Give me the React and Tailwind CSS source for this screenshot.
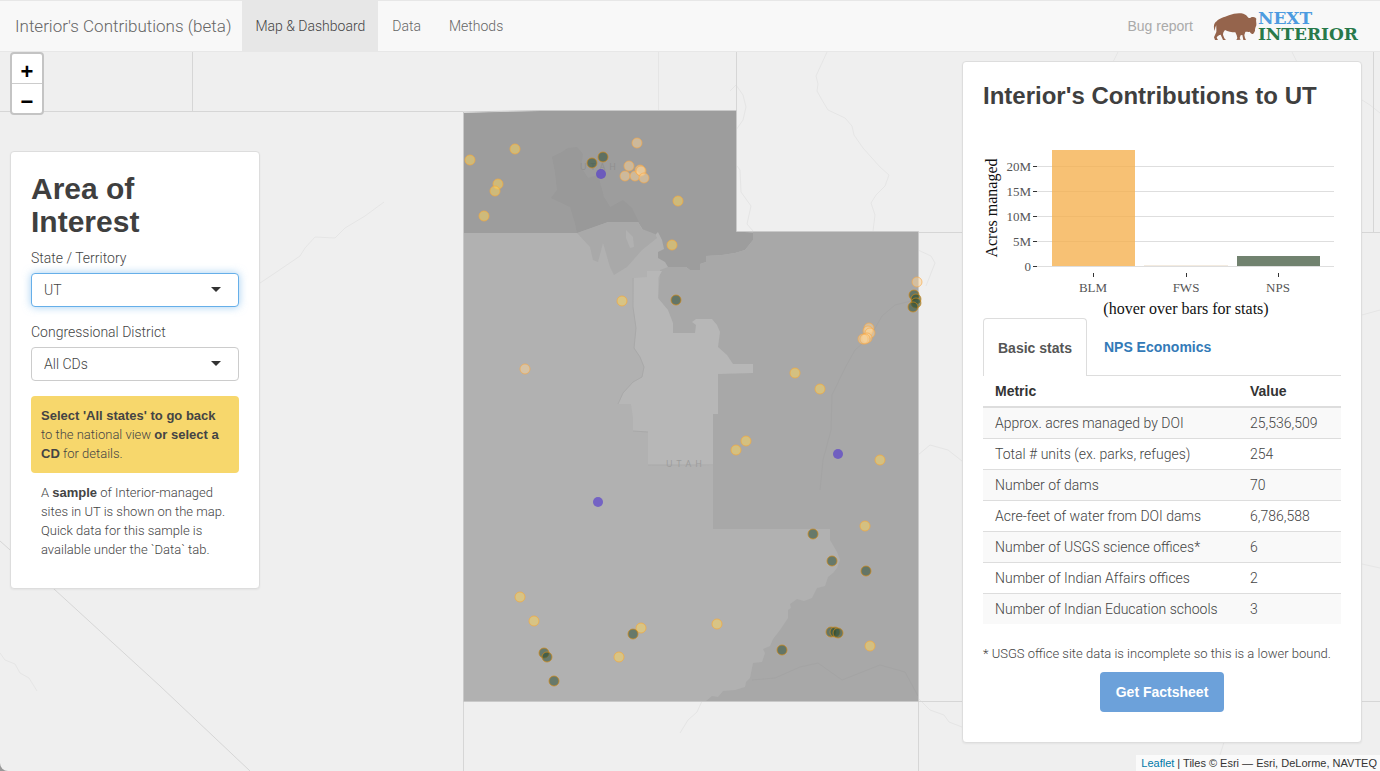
import { useState } from 'react'

const metrics = [
  { metric: 'Approx. acres managed by DOI', value: '25,536,509' },
  { metric: 'Total # units (ex. parks, refuges)', value: '254' },
  { metric: 'Number of dams', value: '70' },
  { metric: 'Acre-feet of water from DOI dams', value: '6,786,588' },
  { metric: 'Number of USGS science offices*', value: '6' },
  { metric: 'Number of Indian Affairs offices', value: '2' },
  { metric: 'Number of Indian Education schools', value: '3' },
]

const sites = {
  blm: [
    [470, 160], [515, 149], [498, 184], [495, 191], [484, 216], [678, 201], [672, 245], [622, 301],
    [795, 373], [820, 389], [746, 441], [736, 450], [880, 460], [865, 526], [870, 646], [717, 624],
    [520, 597], [534, 621], [641, 628], [619, 657],
  ],
  fws: [
    [637, 143], [629, 166], [625, 176], [635, 176], [640, 170], [641, 171], [644, 178], [525, 369],
    [917, 282], [869, 328], [868, 331], [870, 333], [867, 338], [863, 339], [865, 339],
  ],
  nps: [
    [592, 163], [603, 157], [676, 300], [914, 295], [916, 299], [916, 303], [913, 307], [813, 534],
    [832, 561], [866, 571], [831, 632], [835, 632], [838, 633], [782, 650], [633, 634], [544, 653],
    [547, 657], [554, 681],
  ],
  office: [[601, 174], [838, 454], [598, 502]],
}

const Bison = () => (
  <svg viewBox="340 38 132 87" className="h-[29px] w-11" aria-hidden="true">
    <path
      fill="#95644c"
      d="M351 66C357 58 372 54 388 48C402 42 418 40 431 43C438 45 442 49 446 55C450 57 453 56 456 53C462 53 467 54 470 58C468 64 471 70 470 78C468 82 467 86 466 90C467 96 464 100 460 104C456 104 453 101 450 97C445 99 440 96 437 98L434 107L436 116L439 122L431 122L428 107L423 108L420 116L423 121L410 122L413 116L411 108L407 99C396 99 384 97 376 92C372 97 370 101 370 106L374 117L379 122L370 122L363 106C358 106 353 110 351 115L355 122L346 122L343 114L350 98C351 90 349 84 350 78L347 84L345 95C341 82 342 72 351 66Z"
    />
  </svg>
)

const Header = () => {
  return (
    <header className="flex min-h-13 items-stretch border-y border-[#e7e7e7] bg-[#f8f8f8] text-sm">
      <a href="#home" className="flex items-center pr-[11px] pl-[15px] font-[Roboto,sans-serif] text-[17px] font-light text-[#666]">
        Interior's Contributions (beta)
      </a>
      <nav className="flex flex-1 items-stretch font-[Roboto,sans-serif] font-light text-[#666]">
        <a href="#map" className="flex items-center bg-[#e7e7e7] px-[13px] text-[#444]">Map &amp; Dashboard</a>
        <a href="#data" className="flex items-center px-[14px]">Data</a>
        <a href="#methods" className="flex items-center px-[14px]">Methods</a>
      </nav>
      <div className="flex items-center gap-5 pr-[22px]">
        <a href="#bug" className="text-[#aaa]">Bug report</a>
        <a href="#doi" className="flex items-center gap-px" aria-label="Next Interior">
          <Bison />
          <span className="flex flex-col font-['DejaVu_Serif',serif] text-[17px] leading-4 font-bold">
            <span className="text-[#4d9be0]">NEXT</span>
            <span className="text-[#28794a]">INTERIOR</span>
          </span>
        </a>
      </div>
    </header>
  )
}

const StateMap = () => (
  <svg
    viewBox="0 52 1380 719"
    preserveAspectRatio="xMidYMin slice"
    className="absolute inset-0 h-full w-full"
    role="img"
    aria-label="Map of Utah congressional districts"
  >
    {/* rivers and roads */}
    <g fill="none" stroke="#e5e5e5" strokeWidth="1">
      <path d="M260 283L275 273L300 256L305 248L315 237L335 238L345 228L365 216L384 202" />
      <path d="M0 653L5 660L15 664L20 673L29 678L37 691" />
      <path d="M827 52L816 76L818 84L817 91L822 100L828 110L845 118L852 126L854 135L863 148L880 167L889 175L885 186L876 195L871 203L875 215L873 231" />
      <path d="M736 85L743 95L746 107L743 120L736 130M730 91L736 85M737 166L740 170L741 192L751 206L747 224L753 231" />
      <path d="M918 250L931 256L935 263L926 286M918 455L930 445L948 450L962 461" />
      <path d="M702 701L697 712L688 720L680 733M918 698L930 710L944 715L949 722L962 727" />
      <path d="M1362 100L1370 105L1380 113M1362 315L1380 310M1362 564L1380 568M1224 742L1220 755" />
      <path d="M1118 52L1113 62M1292 52L1297 62" />
    </g>
    {/* state lines */}
    <g fill="none" stroke="#d6d6d6" strokeWidth="1">
      <path d="M0 111.5H463M192.5 52V111M736.5 52V111M1373.5 52V232M918 232.5H1380M918 701.5H1380M918.5 701V771M463.5 701V771" />
      <path d="M0 541L54 589L160 686L250 771" />
      <path d="M658.5 52V110" stroke="#e5e5e5" />
    </g>
    <path fill="#b1b1b1" d="M463 113L540 111H736V232H918V701H463Z" />
    <path
      fill="#9d9d9d"
      d="M463 113L540 111H736V231L753 233V240L745 250L735 253L722 255L706 256V262L700 264V270L690 270L686 267H668L665 262L658 258V252L664 249L662 240L658 232L655 235L645 233L638 222H608L578 233H463Z"
    />
    <path
      fill="#999"
      d="M552 157L560 153L568 148L577 147L583 154L581 167L588 178L598 175L604 197L610 207L623 200L632 208L639 222H608L577 233L575 223L570 207L551 198L557 190L555 172Z"
    />
    <path fill="#a9a9a9" d="M577 233L608 222H638L642 229L655 234L657 238L642 250L627 267L614 275L610 267L603 243L598 262L593 260L590 247Z" />
    <path fill="#b1b1b1" d="M626 230L633 237L634 247L630 248L626 238Z" />
    <path
      fill="#a8a8a8"
      d="M753 232L918 232V701H706L712 696L718 697L723 691L735 690L745 687L746 682L750 678L753 663L762 662L765 653L763 649L770 646L773 639L780 630L788 618L788 610L791 608L790 604L797 599L804 601L812 598L817 588L825 586L828 577L833 573L837 568L840 560L837 552L830 540V529H713V466L648 465L660 270L668 267H686L690 270H700V264L706 262V256L722 255L735 253L745 250L753 240Z"
    />
    <path
      fill="#b7b7b7"
      d="M647 271H662L658 278V298L668 310L673 323V333L695 333L696 325L692 322L696 319H712L717 325L720 332L718 347L727 355L733 364H753V373L718 374V414H713V466L648 465V432L633 431V418L631 404H618L623 393L633 382L642 377L644 367L640 357L634 348L636 328L633 307L634 278L647 277Z"
    />
    <path fill="none" stroke="#a9a9a9" d="M633 278L633 307L636 328L634 348L640 357L644 367L642 377L633 382L623 393L618 404M633 431L648 432M648 465H713" />
    <path fill="none" stroke="#a4a4a4" d="M915 300L895 305L882 316L870 337L855 350L845 368L832 395L831 430L823 460L820 490M752 680L775 678L800 667L818 663L842 680L880 665L905 672L918 696" />
    <path fill="none" stroke="#c9c9c9" d="M463 112L540 110.500H736.500V231.500H918.500V701.500H463.500V112" />
    <g fill="#8f8f8f" fontFamily="Open Sans, sans-serif" fontSize="9">
      <text x="580" y="170" letterSpacing="4">UTAH</text>
      <text x="666" y="467" letterSpacing="4" fill="#9c9c9c">UTAH</text>
    </g>
    <g fill="#ffd75a" fillOpacity=".5" stroke="#f5a93a" strokeOpacity=".7">
      {sites.blm.map(([x, y]) => <circle key={`${x}-${y}`} cx={x} cy={y} r="5" />)}
    </g>
    <g fill="#fdd59a" fillOpacity=".5" stroke="#f8a845" strokeOpacity=".65">
      {sites.fws.map(([x, y]) => <circle key={`${x}-${y}`} cx={x} cy={y} r="5" />)}
    </g>
    <g fill="#2a4a30" fillOpacity=".55" stroke="#cf8a1a" strokeOpacity=".75">
      {sites.nps.map(([x, y]) => <circle key={`${x}-${y}`} cx={x} cy={y} r="5" />)}
    </g>
    <g fill="#4b2fd0" fillOpacity=".6">
      {sites.office.map(([x, y]) => <circle key={`${x}-${y}`} cx={x} cy={y} r="5" />)}
    </g>
  </svg>
)

const SelectField = ({ id, label, value, onChange, options, active }) => (
  <div className="mb-[15px]">
    <label htmlFor={id} className="mb-[5px] block font-[Roboto,sans-serif] text-sm font-light text-[#444]">{label}</label>
    <div className="relative">
      <select
        id={id}
        value={value}
        onChange={(e) => onChange(e.target.value)}
        className={
          active
            ? 'block h-[34px] w-full appearance-none rounded border border-[#66afe9] bg-white px-3 font-[Roboto,sans-serif] text-sm font-light text-[#444] shadow-[0_0_8px_rgba(102,175,233,0.6)] outline-none'
            : 'block h-[34px] w-full appearance-none rounded border border-[#ccc] bg-white px-3 font-[Roboto,sans-serif] text-sm font-light text-[#444] outline-none'
        }
      >
        {options.map((option) => <option key={option}>{option}</option>)}
      </select>
      <svg viewBox="0 0 10 5" className="pointer-events-none absolute top-3.5 right-[18px] h-[5px] w-2.5" aria-hidden="true">
        <path d="M0 0H10L5 5Z" fill="#333" />
      </svg>
    </div>
  </div>
)

const AreaPanel = () => {
  const [territory, setTerritory] = useState('UT')
  const [district, setDistrict] = useState('All CDs')

  return (
    <section className="mt-9 w-[250px] rounded border border-[#ddd] bg-white p-5 pb-[19px] text-[#444] shadow-xs">
      <h2 className="mb-2.5 text-3xl leading-[33px] font-bold text-[#3f3f3f]">Area of Interest</h2>
      <SelectField id="state" label="State / Territory" value={territory} onChange={setTerritory} options={['UT', 'All states']} active />
      <SelectField id="cd" label="Congressional District" value={district} onChange={setDistrict} options={['All CDs', 'CD 1', 'CD 2', 'CD 3', 'CD 4']} />
      <p className="rounded-sm bg-[#f7d76c] p-2.5 font-[Roboto,sans-serif] text-[13px] leading-[19px] font-light">
        <b className="font-['Liberation_Sans',sans-serif] font-bold">Select 'All states' to go back</b> to the national view{' '}
        <b className="font-['Liberation_Sans',sans-serif] font-bold">or select a CD</b> for details.
      </p>
      <p className="p-2.5 font-[Roboto,sans-serif] text-[13px] leading-[19px] font-light">
        A <b className="font-['Liberation_Sans',sans-serif] font-bold">sample</b> of Interior-managed sites in UT is shown on the map. Quick data for this sample is available under the `Data` tab.
      </p>
    </section>
  )
}

const ticks = [
  { label: '20M', y: 46 },
  { label: '15M', y: 71 },
  { label: '10M', y: 96 },
  { label: '5M', y: 121 },
  { label: '0', y: 146 },
]

const AcresChart = () => (
  <svg viewBox="0 0 358 198" className="block w-full font-['Liberation_Serif',serif]" role="img" aria-label="Acres managed by bureau">
    {ticks.map((t) => (
      <g key={t.label}>
        <path d={`M54 ${t.y + 0.5}H351`} stroke="#dedede" />
        <path d={`M50 ${t.y + 0.5}H54`} stroke="#333" />
        <text x="48" y={t.y + 5} textAnchor="end" fontSize="13" fill="#555">{t.label}</text>
      </g>
    ))}
    <rect x="69" y="30" width="83" height="116" fill="#f5b04d" fillOpacity=".78" />
    <rect x="161" y="145" width="84" height="1" fill="#f3ebe0" />
    <rect x="254" y="136" width="83" height="10" fill="#71826f" />
    {[['BLM', 110], ['FWS', 203], ['NPS', 295]].map(([name, x]) => (
      <g key={name}>
        <path d={`M${x + 0.5} 153V157`} stroke="#333" />
        <text x={x} y="172" textAnchor="middle" fontSize="13" fill="#555">{name}</text>
      </g>
    ))}
    <text x="203" y="194" textAnchor="middle" fontSize="16" fill="#111">(hover over bars for stats)</text>
    <text transform="translate(14 88) rotate(-90)" textAnchor="middle" fontSize="16" fill="#111">Acres managed</text>
  </svg>
)

const StatsPanel = () => {
  const [tab, setTab] = useState('basic')

  return (
    <section className="mt-[9px] w-[400px] rounded border border-[#ddd] bg-white px-5 pt-[21px] pb-[30px] text-[#444] shadow-xs">
      <h2 className="mb-[11px] text-2xl leading-[26px] font-bold text-[#3f3f3f]">Interior's Contributions to UT</h2>
      <AcresChart />
      <div role="tablist" className="flex border-b border-[#ddd] text-sm font-bold">
        <button
          type="button"
          role="tab"
          aria-selected={tab === 'basic'}
          onClick={() => setTab('basic')}
          className="-mb-px h-[58px] rounded-t border border-b-0 border-[#ddd] bg-white px-[14px] text-[#555]"
        >
          Basic stats
        </button>
        <button type="button" role="tab" aria-selected={tab === 'nps'} onClick={() => setTab('nps')} className="px-[17px] text-[#337ab7]">
          NPS Economics
        </button>
      </div>
      <table className="w-full table-fixed text-left text-sm leading-5">
        <thead>
          <tr className="border-b-2 border-[#ddd] text-[#333]">
            <th className="w-[255px] px-3 py-[5px]">Metric</th>
            <th className="px-3 py-[5px]">Value</th>
          </tr>
        </thead>
        <tbody className="font-[Roboto,sans-serif] font-light">
          {metrics.map((row) => (
            <tr key={row.metric} className="border-t border-[#ddd] odd:bg-[#f9f9f9]">
              <td className="px-3 py-[5px]">{row.metric}</td>
              <td className="px-3 py-[5px]">{row.value}</td>
            </tr>
          ))}
        </tbody>
      </table>
      <p className="mt-5 font-[Roboto,sans-serif] text-[13px] leading-[19px] font-light">* USGS office site data is incomplete so this is a lower bound.</p>
      <div className="mt-[9px] flex justify-center">
        <button type="button" className="h-10 rounded-sm bg-[#6ca1da] px-4 text-sm font-bold text-white">Get Factsheet</button>
      </div>
    </section>
  )
}

const App = () => {
  return (
    <div className="flex min-h-screen flex-col bg-[#999] font-['Liberation_Sans',Arial,sans-serif]">
      <Header />
      <main className="relative flex-1 overflow-hidden rounded-bl-lg bg-[#efefef]">
        <StateMap />
        <div className="relative flex items-start justify-between pr-[18px] pb-5 pl-2.5">
          <div className="flex flex-col items-start">
            <div className="flex flex-col rounded border-2 border-[#c4c4c4] bg-white text-[22px] leading-5 font-bold text-black">
              <button type="button" aria-label="Zoom in" className="h-[30px] w-[30px] border-b border-[#ccc] pt-1.5">+</button>
              <button type="button" aria-label="Zoom out" className="h-[29px] w-[30px] pt-1.5">−</button>
            </div>
            <AreaPanel />
          </div>
          <StatsPanel />
        </div>
        <footer className="absolute right-0 bottom-0 bg-white/70 pr-[3px] pl-[5px] text-[11px] leading-4 text-[#333]">
          <a href="#leaflet" className="text-[#0078a8]">Leaflet</a> | Tiles © Esri — Esri, DeLorme, NAVTEQ
        </footer>
      </main>
    </div>
  )
}

export default App
